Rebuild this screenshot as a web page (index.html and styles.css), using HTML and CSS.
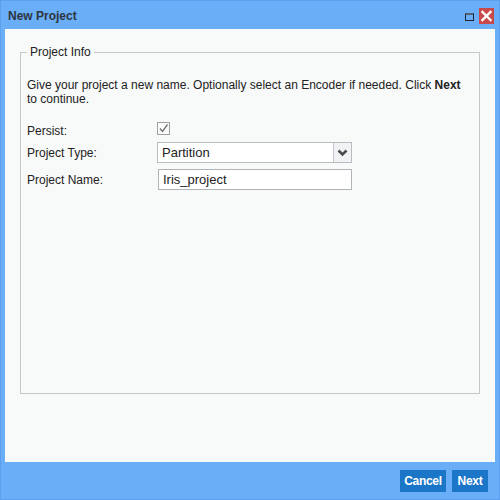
FILE: index.html
```html
<!DOCTYPE html>
<html>
<head>
<meta charset="utf-8">
<link rel="stylesheet" href="styles.css">
</head>
<body>
<div class="window">
  <div class="header">
    <span class="title">New Project</span>
    <div class="tools">
      <span class="max-icon"></span>
      <span class="close-btn">
        <svg width="15" height="16" viewBox="0 0 15 16"><path d="M3.5 4 L11.5 12 M11.5 4 L3.5 12" stroke="#fff" stroke-width="2.4" stroke-linecap="square"/></svg>
      </span>
    </div>
  </div>
  <div class="body">
    <fieldset class="info">
      <legend>Project Info</legend>
      <p class="intro">Give your project a new name. Optionally select an Encoder if needed. Click <b>Next</b><br>to continue.</p>
      <div class="row row-persist">
        <label class="lbl">Persist:</label>
        <span class="check">
          <svg width="11" height="11" viewBox="0 0 11 11"><path d="M2 5.5 L4.5 8.5 L9.5 1.5" fill="none" stroke="#707070" stroke-width="1.3"/></svg>
        </span>
      </div>
      <div class="row row-type">
        <label class="lbl">Project Type:</label>
        <div class="select">
          <span class="sel-text">Partition</span>
          <span class="sel-btn">
            <svg width="11" height="8" viewBox="0 0 11 8"><path d="M1.5 1.5 L5.5 5.5 L9.5 1.5" fill="none" stroke="#4a4a4a" stroke-width="2.6"/></svg>
          </span>
        </div>
      </div>
      <div class="row row-name">
        <label class="lbl">Project Name:</label>
        <div class="input">Iris_project</div>
      </div>
    </fieldset>
  </div>
  <div class="footer">
    <span class="btn btn-cancel">Cancel</span>
    <span class="btn btn-next">Next</span>
  </div>
</div>
</body>
</html>
```

FILE: styles.css
```css
html, body {
  margin: 0;
  padding: 0;
}
body {
  font-family: "Liberation Sans", Arial, sans-serif;
  font-size: 12px;
  color: #222;
}
.window {
  width: 500px;
  height: 500px;
  box-sizing: border-box;
  background: #6aaef8;
  border: 1px solid #5c9fee;
  display: flex;
  flex-direction: column;
}
.header {
  height: 28px;
  display: flex;
  align-items: center;
  justify-content: space-between;
  padding: 0 5px 0 7px;
}
.title {
  font-weight: bold;
  color: #2d3540;
  margin-top: 2px;
}
.tools {
  display: flex;
  align-items: center;
  gap: 5px;
  margin-top: 1px;
}
.max-icon {
  width: 7px;
  height: 5px;
  border: 1px solid #1a2430;
  border-top: 2px solid #556070;
  margin-top: 2px;
}
.close-btn {
  width: 15px;
  height: 16px;
  background: #c94a4a;
  display: flex;
}
.body {
  height: 433px;
  box-sizing: border-box;
  margin: 0 4px;
  background: #f8f9f9;
  padding: 16px 15px 68px;
  display: flex;
  flex-direction: column;
}
.info {
  flex: 1;
  margin: 0;
  border: 1px solid #c3c6ca;
  padding: 19px 6px 0;
  min-width: 0;
}
.info legend {
  padding: 0 3px;
  line-height: 14px;
  color: #222;
}
.intro {
  margin: 0 0 14px;
  line-height: 14px;
}
.row {
  display: flex;
  align-items: center;
}
.lbl {
  width: 130px;
  line-height: 14px;
}
.row-persist {
  align-items: flex-end;
  height: 18px;
}
.check {
  width: 11px;
  height: 11px;
  border: 1px solid #a0a0a0;
  background: #fbfbfb;
  margin-bottom: 3px;
  display: flex;
}
.row-type {
  margin-top: 4px;
}
.select {
  width: 193px;
  height: 19px;
  border: 1px solid #b8bcc0;
  background: #fff;
  display: flex;
}
.sel-text {
  flex: 1;
  padding-left: 4px;
  line-height: 19px;
  font-size: 13px;
}
.sel-btn {
  width: 17px;
  border-left: 1px solid #c3c6ca;
  background: #f1f2f3;
  display: flex;
  align-items: center;
  justify-content: center;
}
.row-name {
  margin-top: 6px;
}
.input {
  width: 188px;
  height: 19px;
  border: 1px solid #b0b4b8;
  background: #fff;
  padding-left: 4px;
  line-height: 19px;
  font-size: 13px;
  margin-left: 1px;
}
.footer {
  flex: 1;
  display: flex;
  justify-content: flex-end;
  align-items: center;
  gap: 6px;
  padding-right: 11px;
}
.btn {
  background: #1c76c8;
  color: #fff;
  font-weight: bold;
  height: 22px;
  line-height: 22px;
  text-align: center;
  letter-spacing: -0.3px;
}
.btn-cancel {
  width: 46px;
}
.btn-next {
  width: 36px;
}
```
